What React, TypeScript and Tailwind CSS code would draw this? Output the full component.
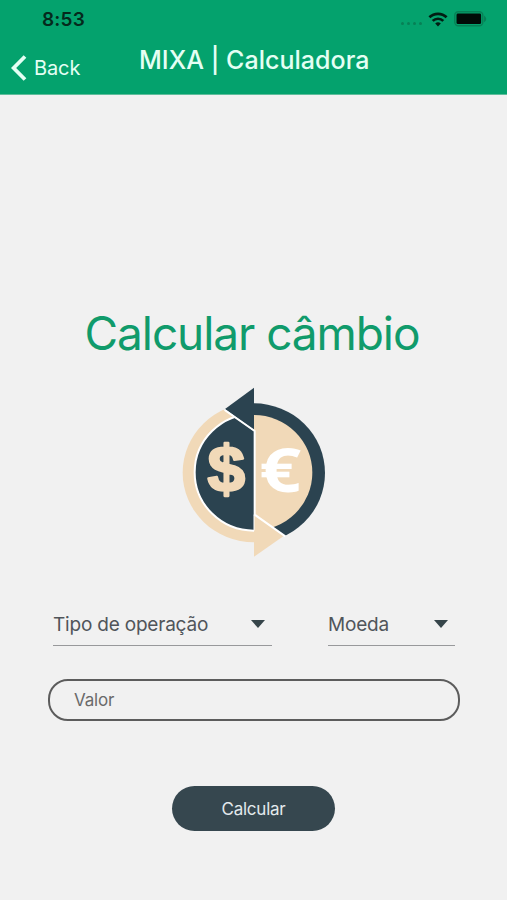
import { useState } from 'react'

const inter = "font-['Inter','Liberation_Sans',sans-serif]"

export default function App() {
  const [valor, setValor] = useState('')

  return (
    <div className={`w-[507px] h-[900px] bg-[#f1f1f1] overflow-hidden flex flex-col ${inter}`}>
      <header className="h-[95px] shrink-0 bg-[#04a26d] border-b border-[#5fbd9b]">
        <StatusBar />
        <div className="grid grid-cols-[139px_1fr] h-[56px]">
          <button className="flex items-center gap-[7px] pl-[11px] pt-[4px] h-[52px] mt-[2px] text-[#e4fff4]">
            <svg width="16" height="26" viewBox="0 0 16 26" fill="none" stroke="currentColor" strokeWidth="3.8">
              <path d="M14 1.5 2.6 13 14 24.5" />
            </svg>
            <span className="text-[20px] leading-6 tracking-[-0.1px]">Back</span>
          </button>
          <h1 className="pt-[7px] text-[25px] leading-[30px] font-medium tracking-[0.03px] text-[#e4fff4] whitespace-nowrap">
            MIXA | Calculadora
          </h1>
        </div>
      </header>

      <main className="flex flex-col items-center pt-[208px]">
        <h2 className="mr-[3px] text-[46px] leading-[60px] tracking-[-1.08px] text-[#109b6b] whitespace-nowrap">Calcular câmbio</h2>
        <CambioIcon />

        <div className="flex gap-[56px] mt-[37px] ml-px">
          <Seletor label="Tipo de operação" largura="w-[219px]" />
          <Seletor label="Moeda" largura="w-[127px]" />
        </div>

        <input
          value={valor}
          onChange={e => setValor(e.target.value)}
          placeholder="Valor"
          className="mt-[33px] ml-px w-[412px] h-[42px] rounded-[20px] border-2 border-[#5c5c5c] bg-transparent px-[24px] text-[17px] tracking-[-0.2px] text-[#454545] placeholder:text-[#6a6a6a] outline-none"
        />

        <button className="mt-[65px] pt-[2px] w-[163px] h-[45px] rounded-full bg-[#36474f] text-[17px] tracking-[-0.25px] text-[#e3e9ec]">
          Calcular
        </button>
      </main>
    </div>
  )
}

function StatusBar() {
  return (
    <div className="h-[38px] flex items-center justify-between pl-[42px] pr-[20px]">
      <span className="pt-px text-[19px] leading-6 font-semibold tracking-[0.2px] text-[#05291c]">8:53</span>
      <div className="flex items-center">
        <div className="flex gap-[3px] mt-[9px] mr-[6px]">
          {[0, 1, 2, 3].map(i => (
            <span key={i} className="w-[3px] h-[3px] rounded-full bg-[#078056]" />
          ))}
        </div>
        <svg width="20" height="15" viewBox="0 0 20 15" fill="none" stroke="#021d13" strokeWidth="2.7">
          <path d="M1.4 5.3a12.3 12.3 0 0 1 17.2 0" />
          <path d="M4.7 8.9a7.6 7.6 0 0 1 10.6 0" />
          <path d="M10 14.4 7.2 11.6a4 4 0 0 1 5.6 0z" fill="#021d13" stroke="none" />
        </svg>
        <svg className="ml-[6px]" width="33" height="16" viewBox="0 0 33 16">
          <rect x="0.8" y="0.8" width="28" height="14" rx="3.5" fill="none" stroke="#078056" strokeWidth="1.4" />
          <rect x="2.5" y="2.5" width="24.6" height="10.6" rx="1.4" fill="#010b07" />
          <path d="M30 4.5q4.6 3.4 0 6.8z" fill="#078056" />
        </svg>
      </div>
    </div>
  )
}

function CambioIcon() {
  return (
    <svg className="mt-[17px] ml-[3px]" width="170" height="185" viewBox="0 0 510 555">
      <defs>
        <clipPath id="esquerda">
          <path d="M0 -24 252 154V555H0z" />
        </clipPath>
        <clipPath id="direita">
          <path d="M252 0H510V587L252 402z" />
        </clipPath>
      </defs>
      <g clipPath="url(#esquerda)">
        <ellipse cx="252" cy="278" rx="214" ry="209" fill="#f1d9b8" />
        <ellipse cx="252" cy="277" rx="178" ry="175" fill="#2b4350" stroke="#fff" strokeWidth="6" />
      </g>
      <g clipPath="url(#direita)">
        <ellipse cx="252" cy="279" rx="213" ry="209" fill="#2b4350" />
        <ellipse cx="252" cy="278" rx="175" ry="173" fill="#f1d9b8" />
      </g>
      {/* arrow heads */}
      <path d="M252 23 165 87 252 150z" fill="#2b4350" />
      <path d="M252 402 342 467 252 530z" fill="#f1d9b8" />
      <path d="M164 90 254 153V404L346 469" stroke="#fff" strokeWidth="6" fill="none" />
      <path d="M252 404V452" stroke="#fff" strokeWidth="3" fill="none" />
      <text
        transform="translate(169 332) scale(1.18 1.13)"
        textAnchor="middle"
        fontSize="172"
        fill="#f1d9b8"
        stroke="#f1d9b8"
        strokeWidth="6"
        strokeLinejoin="round"
        className="font-['Liberation_Sans',sans-serif] font-bold"
      >
        $
      </text>
      <text
        transform="translate(331 337) scale(1.28 1.06)"
        textAnchor="middle"
        fontSize="172"
        fill="#fff"
        className="font-['Open_Sans',sans-serif] font-bold"
      >
        €
      </text>
    </svg>
  )
}

function Seletor({ label, largura }: { label: string; largura: string }) {
  return (
    <button className={`${largura} h-[44px] flex items-center justify-between border-b border-[#98999b] pr-[7px] text-[19px] tracking-[-0.2px] text-[#50555a]`}>
      <span className="pt-[4px] whitespace-nowrap">{label}</span>
      <svg width="14" height="8" viewBox="0 0 14 8">
        <path d="M0 0h14L7 8z" fill="#36454a" />
      </svg>
    </button>
  )
}
